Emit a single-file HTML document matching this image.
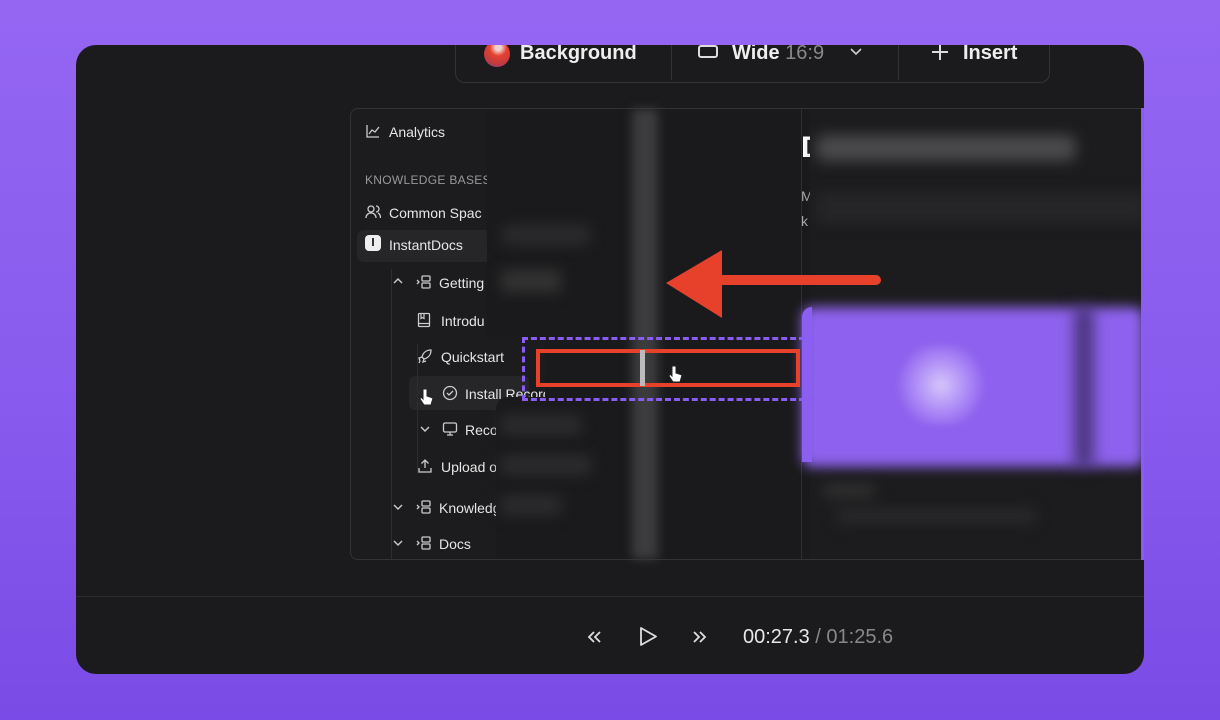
<!DOCTYPE html>
<html><head><style>
*{margin:0;padding:0;box-sizing:border-box}
body{width:1220px;height:720px;overflow:hidden;background:linear-gradient(180deg,#9466f2 0%,#8a5cee 50%,#7a4be6 100%);font-family:"Liberation Sans",sans-serif;position:relative}
.frame{position:absolute;left:76px;top:45px;width:1068px;height:629px;background:#1b1b1d;border-radius:20px;overflow:hidden}
.ab{position:absolute}
.t{color:#e6e6e6;font-size:14px;position:absolute;white-space:nowrap}
.blur{position:absolute;filter:blur(7px)}
svg{position:absolute}
</style></head><body>
<div class="frame">
 <!-- toolbar -->
 <div class="ab" style="left:379px;top:-20px;width:595px;height:58px;border:1px solid #333;border-radius:10px;background:#1b1b1d"></div>
 <div class="ab" style="left:408px;top:-4px;width:26px;height:26px;border-radius:50%;background:radial-gradient(circle at 55% 25%,#f3d0d0 0 12%,#e4412f 35%,#c03a40 70%,#6d45c8 100%)"></div>
 <div class="t" style="left:444px;top:-3px;font-size:20px;font-weight:bold;color:#eee">Background</div>
 <div class="ab" style="left:595px;top:-20px;width:1px;height:55px;background:#333"></div>
 <div class="ab" style="left:622px;top:0px;width:20px;height:13px;border:2px solid #ddd;border-radius:3px"></div>
 <div class="t" style="left:656px;top:-3px;font-size:20px;font-weight:bold;color:#eee">Wide <span style="color:#888;font-weight:normal">16:9</span></div>
 <svg style="left:773px;top:2px" width="14" height="10"><path d="M2 2l5 5 5-5" stroke="#ccc" stroke-width="1.6" fill="none"/></svg>
 <div class="ab" style="left:822px;top:-20px;width:1px;height:55px;background:#333"></div>
 <svg style="left:855px;top:-2px" width="18" height="18"><path d="M9 1v16M1 9h16" stroke="#ddd" stroke-width="2"/></svg>
 <div class="t" style="left:887px;top:-3px;font-size:20px;font-weight:bold;color:#eee">Insert</div>

 <!-- screen panel -->
 <div class="ab" style="left:274px;top:63px;width:810px;height:452px;border:1px solid #333;border-radius:8px;background:#1c1c1e;overflow:hidden">
  <div class="ab" style="left:6px;top:121px;width:146px;height:32px;border-radius:7px;background:#262628"></div>
  <div class="ab" style="left:58px;top:267px;width:120px;height:34px;border-radius:6px;background:#262628"></div>
  <div class="ab" style="left:40px;top:160px;width:1px;height:290px;background:#2d2d2f"></div>
  <div class="ab" style="left:66px;top:235px;width:1px;height:130px;background:#2d2d2f"></div>
 </div>
 <svg style="left:289px;top:78px" width="16" height="16"><path d="M2 2v12h12M4 11l3-4 3 2 4-5" stroke="#ccc" stroke-width="1.3" fill="none"/></svg>
 <div class="t" style="left:313px;top:79px">Analytics</div>
 <div class="t" style="left:289px;top:128px;font-size:12px;color:#999;letter-spacing:.3px">KNOWLEDGE BASES</div>
 <svg style="left:289px;top:159px" width="16" height="16"><circle cx="6" cy="5" r="3" stroke="#ccc" fill="none" stroke-width="1.3"/><path d="M1 14c0-3 2-5 5-5s5 2 5 5M11 2a3 3 0 010 6M13 9c2 1 2.5 3 2.5 5" stroke="#ccc" fill="none" stroke-width="1.3"/></svg>
 <div class="t" style="left:313px;top:160px">Common Spac</div>
 <div class="ab" style="left:289px;top:190px;width:16px;height:16px;border-radius:4px;background:#eee"></div>
 <div class="ab" style="left:296px;top:193px;width:2px;height:8px;background:#333"></div>
 <div class="t" style="left:313px;top:192px">InstantDocs</div>
 <svg style="left:316px;top:231px" width="12" height="10"><path d="M2 7l4-4 4 4" stroke="#ccc" stroke-width="1.4" fill="none"/></svg>
 <svg style="left:340px;top:229px" width="16" height="16"><rect x="6" y="2" width="8" height="5" rx="1" stroke="#ccc" fill="none" stroke-width="1.3"/><rect x="6" y="9" width="8" height="5" rx="1" stroke="#ccc" fill="none" stroke-width="1.3"/><path d="M1 6l2 2-2 2" stroke="#ccc" fill="none" stroke-width="1.3"/></svg>
 <div class="t" style="left:363px;top:230px">Getting</div>
 <svg style="left:341px;top:267px" width="14" height="16"><rect x="1.5" y="1.5" width="11" height="13" rx="1" stroke="#ccc" fill="none" stroke-width="1.3"/><path d="M4 1.5v5l1.5-1 1.5 1v-5M1.5 11.5h11" stroke="#ccc" fill="none" stroke-width="1.2"/></svg>
 <div class="t" style="left:365px;top:268px">Introdu</div>
 <svg style="left:341px;top:303px" width="16" height="16"><path d="M14 2c-5 0-8 3-9 7l2 2c4-1 7-4 7-9zM5 9l-3 1 1 3M7 11l-1 3 3-1M3 13l-1 2" stroke="#ccc" fill="none" stroke-width="1.3"/></svg>
 <div class="t" style="left:365px;top:304px">Quickstart</div>
 <svg style="left:366px;top:340px" width="16" height="16"><circle cx="8" cy="8" r="6.5" stroke="#ccc" fill="none" stroke-width="1.3"/><path d="M5 8l2 2 4-4" stroke="#ccc" fill="none" stroke-width="1.3"/></svg>
 <div class="t" style="left:389px;top:341px">Install Recorder</div>
 <svg style="left:342px;top:340px" width="16" height="24"><path d="M5 4v10l-2-2-1 2 4 6h7l2-7-6-2V4z" fill="#fff" stroke="#222" stroke-width="1"/></svg>
 <svg style="left:343px;top:379px" width="12" height="10"><path d="M2 3l4 4 4-4" stroke="#ccc" stroke-width="1.4" fill="none"/></svg>
 <svg style="left:366px;top:376px" width="16" height="16"><rect x="1.5" y="2" width="13" height="9" rx="1.5" stroke="#ccc" fill="none" stroke-width="1.3"/><path d="M5 14h6M8 11v3" stroke="#ccc" stroke-width="1.3"/></svg>
 <div class="t" style="left:389px;top:377px">Recording</div>
 <svg style="left:341px;top:413px" width="16" height="16"><path d="M8 10V2M4.5 5.5L8 2l3.5 3.5M2 10v4h12v-4" stroke="#ccc" fill="none" stroke-width="1.3"/></svg>
 <div class="t" style="left:365px;top:414px">Upload o</div>
 <svg style="left:316px;top:457px" width="12" height="10"><path d="M2 3l4 4 4-4" stroke="#ccc" stroke-width="1.4" fill="none"/></svg>
 <svg style="left:340px;top:454px" width="16" height="16"><rect x="6" y="2" width="8" height="5" rx="1" stroke="#ccc" fill="none" stroke-width="1.3"/><rect x="6" y="9" width="8" height="5" rx="1" stroke="#ccc" fill="none" stroke-width="1.3"/><path d="M1 6l2 2-2 2" stroke="#ccc" fill="none" stroke-width="1.3"/></svg>
 <div class="t" style="left:363px;top:455px">Knowledge</div>
 <svg style="left:316px;top:493px" width="12" height="10"><path d="M2 3l4 4 4-4" stroke="#ccc" stroke-width="1.4" fill="none"/></svg>
 <svg style="left:340px;top:490px" width="16" height="16"><rect x="6" y="2" width="8" height="5" rx="1" stroke="#ccc" fill="none" stroke-width="1.3"/><rect x="6" y="9" width="8" height="5" rx="1" stroke="#ccc" fill="none" stroke-width="1.3"/><path d="M1 6l2 2-2 2" stroke="#ccc" fill="none" stroke-width="1.3"/></svg>
 <div class="t" style="left:363px;top:491px">Docs</div>

 <!-- blurred overlay middle -->
 <div class="ab" style="left:411px;top:64px;width:323px;height:228px;background:#1a1a1c"></div>
 <div class="ab" style="left:469px;top:292px;width:265px;height:60px;background:#1a1a1c"></div>
 <div class="ab" style="left:420px;top:352px;width:314px;height:162px;background:#1a1a1c;border-radius:12px 0 0 0"></div>
 <div class="blur" style="left:556px;top:64px;width:26px;height:450px;background:#3c3c3e;filter:blur(5px)"></div>
 <div class="blur" style="left:425px;top:180px;width:90px;height:20px;background:#2b2b2d;border-radius:8px"></div>
 <div class="blur" style="left:425px;top:225px;width:60px;height:22px;background:#333"></div>
 <div class="blur" style="left:425px;top:370px;width:80px;height:20px;background:#2c2c2e"></div>
 <div class="blur" style="left:425px;top:410px;width:90px;height:20px;background:#2c2c2e"></div>
 <div class="blur" style="left:425px;top:450px;width:60px;height:20px;background:#2c2c2e"></div>

 <!-- right content -->
 <div class="ab" style="left:725px;top:63px;width:1px;height:452px;background:#2f2f31"></div>
 <div class="ab" style="left:725px;top:86px;font-size:30px;font-weight:bold;color:#fff">D</div>
 <div class="t" style="left:725px;top:143px;color:#aaa">M</div>
 <div class="t" style="left:725px;top:168px;color:#aaa">k</div>
 <div class="ab" style="left:734px;top:64px;width:334px;height:450px;background:#1c1c1e"></div>
 <div class="blur" style="left:740px;top:90px;width:260px;height:26px;background:#4a4a4c;border-radius:8px"></div>
 <div class="blur" style="left:740px;top:148px;width:330px;height:30px;background:#262628"></div>
 <div class="ab" style="left:726px;top:262px;width:342px;height:160px;background:#8e62ee;filter:blur(6px);border-radius:10px"></div>
 <div class="ab" style="left:726px;top:262px;width:10px;height:155px;background:#8b5ff0;border-radius:10px 0 0 0"></div>
 <div class="blur" style="left:820px;top:300px;width:90px;height:80px;background:radial-gradient(circle,#d6c6fb 0,#a783f5 50%,transparent 75%);filter:blur(3px)"></div>
 <div class="blur" style="left:1000px;top:262px;width:16px;height:160px;background:#3a2a60;filter:blur(8px)"></div>
 <div class="blur" style="left:748px;top:440px;width:50px;height:12px;background:#333"></div>
 <div class="blur" style="left:760px;top:465px;width:200px;height:12px;background:#2c2c2e"></div>
 <div class="ab" style="left:1065px;top:63px;width:3px;height:452px;background:#8b5cf0"></div>

 <!-- annotations -->
 <div class="ab" style="left:446px;top:292px;width:292px;height:64px;border:3px dashed #8b5cf0"></div>
 <div class="ab" style="left:460px;top:304px;width:264px;height:38px;border:4px solid #e8412b"></div>
 <div class="ab" style="left:564px;top:305px;width:5px;height:36px;background:#bbb"></div>
 <svg style="left:590px;top:203px" width="222" height="72"><path d="M0 35L56 2v25h154a5 5 0 010 10H56v33z" fill="#e8412b"/></svg>
 <svg style="left:590px;top:318px" width="22" height="24"><path d="M6 3v10l-2-2-1 2 4 6h7l2-7-6-2V3z" fill="#fff" stroke="#222" stroke-width="1"/></svg>

 <!-- bottom bar -->
 <div class="ab" style="left:0;top:551px;width:1068px;height:1px;background:#2e2e30"></div>
 <svg style="left:510px;top:584px" width="18" height="16"><path d="M8 3L3 8l5 5M14 3L9 8l5 5" stroke="#ddd" stroke-width="1.8" fill="none"/></svg>
 <svg style="left:561px;top:580px" width="22" height="24"><path d="M4 3v17l15-8.5z" stroke="#ddd" stroke-width="1.8" fill="none" stroke-linejoin="round"/></svg>
 <svg style="left:614px;top:584px" width="18" height="16"><path d="M4 3l5 5-5 5M10 3l5 5-5 5" stroke="#ddd" stroke-width="1.8" fill="none"/></svg>
 <div class="t" style="left:667px;top:581px;font-size:20px;color:#e8e8e8">00:27.3 <span style="color:#888">/ 01:25.6</span></div>
</div>
</body></html>
